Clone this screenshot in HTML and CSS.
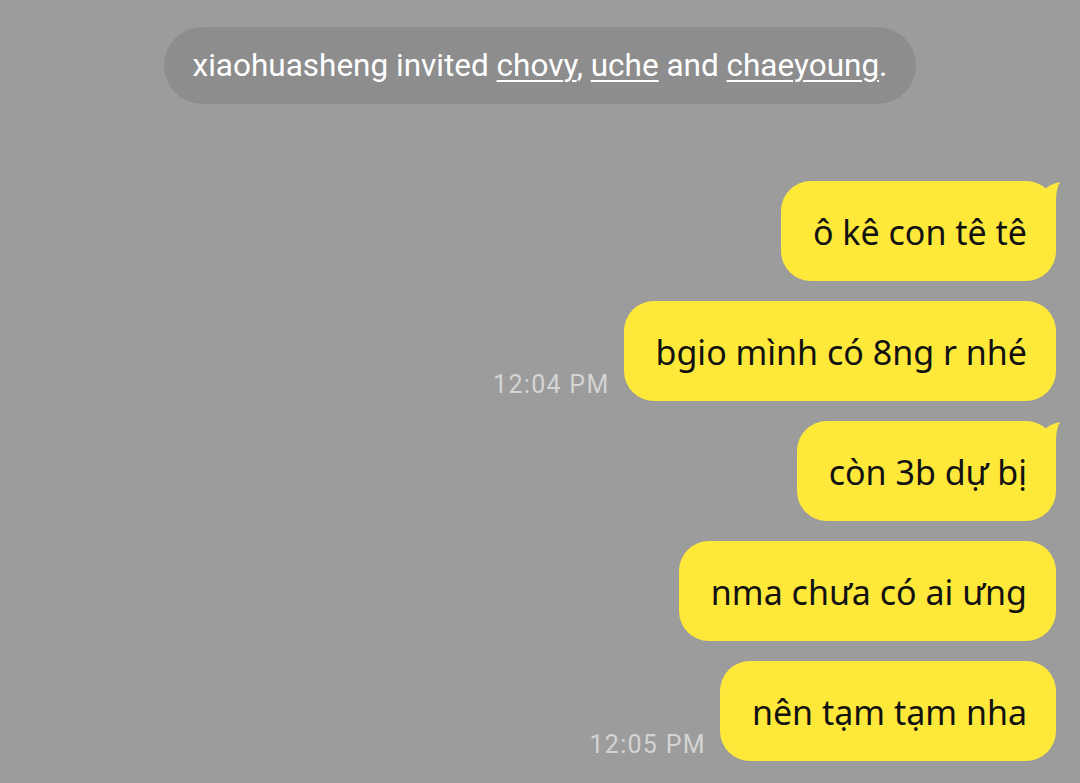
FILE: index.html
```html
<!DOCTYPE html>
<html lang="vi">
<head>
  <meta charset="UTF-8" />
  <title>Chat</title>
  <link rel="stylesheet" href="styles.css">
</head>
<body>
  <div class="chat">
    <div class="notice">
      <span>xiaohuasheng invited <u>chovy</u>, <u>uche</u> and <u>chaeyoung</u>.</span>
    </div>

    <div class="messages">
      <div class="row">
        <div class="bubble first">
          ô kê con tê tê
          <svg class="tail" width="36" height="30" viewBox="0 0 36 30"><path d="M8 2 Q14 4 18 9 Q24 3 34 1 Q30 8 30 20 L30 30 L8 30 Z" fill="#fee83a"/></svg>
        </div>
      </div>
      <div class="row">
        <span class="time">12:04 PM</span>
        <div class="bubble">bgio mình có 8ng r nhé</div>
      </div>
      <div class="row">
        <div class="bubble first">
          còn 3b dự bị
          <svg class="tail" width="36" height="30" viewBox="0 0 36 30"><path d="M8 2 Q14 4 18 9 Q24 3 34 1 Q30 8 30 20 L30 30 L8 30 Z" fill="#fee83a"/></svg>
        </div>
      </div>
      <div class="row">
        <div class="bubble">nma chưa có ai ưng</div>
      </div>
      <div class="row">
        <span class="time">12:05 PM</span>
        <div class="bubble">nên tạm tạm nha</div>
      </div>
    </div>
  </div>
</body>
</html>
```

FILE: styles.css
```css
body {
  margin: 0;
  background: #9c9c9c;
  font-family: Roboto, "Noto Sans", sans-serif;
  height: 783px;
  overflow: hidden;
}

.chat {
  display: flex;
  flex-direction: column;
  align-items: center;
  padding-top: 27px;
}

.notice {
  background: #8d8d8d;
  color: #fff;
  font-size: 31.5px;
  height: 77px;
  padding: 0 29px;
  border-radius: 39px;
  display: flex;
  align-items: center;
}

.notice u {
  text-underline-offset: 4px;
  text-decoration-thickness: 2px;
}

.messages {
  align-self: stretch;
  display: flex;
  flex-direction: column;
  gap: 20px;
  margin-top: 77px;
  padding-right: 24px;
}

.row {
  display: flex;
  justify-content: flex-end;
  align-items: flex-end;
}

.time {
  color: #d4d4d4;
  font-size: 25px;
  letter-spacing: 1.3px;
  margin-right: 14px;
  margin-bottom: 2px;
}

.bubble {
  position: relative;
  background: #fee83a;
  color: #111;
  font-family: "Noto Sans", sans-serif;
  font-size: 34px;
  height: 100px;
  padding: 2px 29px 0 32px;
  border-radius: 30px;
  display: flex;
  align-items: center;
  box-sizing: border-box;
}

.tail {
  position: absolute;
  top: 0;
  right: -6px;
  overflow: visible;
}
```
